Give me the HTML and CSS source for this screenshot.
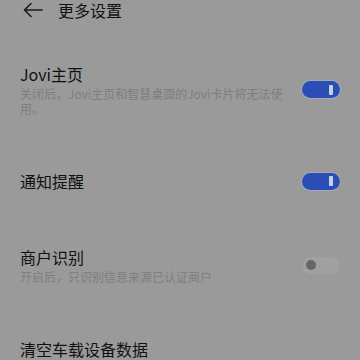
FILE: index.html
```html
<!DOCTYPE html>
<html lang="zh-CN">
<head>
    <meta charset="UTF-8">
    <meta name="viewport" content="width=device-width, initial-scale=1.0">
    <title>更多设置</title>
    <link rel="stylesheet" href="styles.css">
</head>
<body>
    <!-- 顶部标题栏 -->
    <div class="header">
        <svg class="back" width="20" height="16" viewBox="0 0 20 16">
            <path d="M19 8H1.5M8 1.5L1.5 8L8 14.5" fill="none" stroke="#1a1a1a" stroke-width="1.6" stroke-linecap="round" stroke-linejoin="round"/>
        </svg>
        <span class="header-title">更多设置</span>
    </div>

    <!-- 设置列表 -->
    <div class="list">
        <div class="item">
            <div class="item-text">
                <div class="item-title">Jovi主页</div>
                <div class="item-sub">关闭后，Jovi主页和智慧桌面的Jovi卡片将无法使用。</div>
            </div>
            <div class="switch on"><span class="knob"></span></div>
        </div>

        <div class="item">
            <div class="item-text">
                <div class="item-title">通知提醒</div>
            </div>
            <div class="switch on"><span class="knob"></span></div>
        </div>

        <div class="item">
            <div class="item-text">
                <div class="item-title">商户识别</div>
                <div class="item-sub">开启后，只识别信息来源已认证商户</div>
            </div>
            <div class="switch off"><span class="knob"></span></div>
        </div>

        <div class="item">
            <div class="item-text">
                <div class="item-title">清空车载设备数据</div>
            </div>
        </div>
    </div>
</body>
</html>
```

FILE: styles.css
```css
body {
    margin: 0;
    background-color: #9a9a9a;
    font-family: "Noto Sans CJK SC", "Noto Sans", sans-serif;
    color: #111;
    overflow: hidden;
}
.header {
    display: flex;
    align-items: center;
    height: 20px;
    padding-left: 23px;
}
.back {
    display: block;
    margin-right: 15px;
}
.header-title {
    font-size: 16px;
    line-height: 20px;
}
.list {
    margin-top: 16px;
}
.item {
    display: flex;
    align-items: center;
    padding: 27px 20px;
}
.item-text {
    flex: 1;
    max-width: 272px;
}
.item-title {
    font-size: 16px;
    line-height: 22px;
}
.item-sub {
    margin-top: 1px;
    font-size: 12px;
    line-height: 15px;
    color: #7e7e7e;
}
.switch {
    margin-left: auto;
    width: 38px;
    height: 17px;
    border-radius: 9px;
    display: flex;
    align-items: center;
}
.switch.on {
    background-color: #2a4db6;
    box-shadow: 0 0 0 1px rgba(190, 200, 230, 0.35);
    justify-content: flex-end;
}
.switch.on .knob {
    width: 4px;
    height: 10px;
    margin-right: 7px;
    border-radius: 1px;
    background-color: #c9d0df;
}
.switch.off {
    background-color: #a0a0a0;
}
.switch.off .knob {
    width: 10px;
    height: 10px;
    margin-left: 4px;
    border-radius: 50%;
    background-color: #666;
}
```
